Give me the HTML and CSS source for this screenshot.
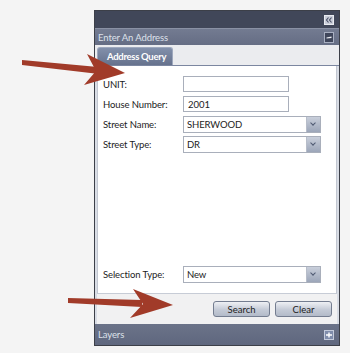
FILE: index.html
```html
<!DOCTYPE html>
<html lang="en">
<head>
    <meta charset="UTF-8">
    <meta name="viewport" content="width=device-width, initial-scale=1.0">
    <title>Enter An Address</title>
    <link rel="stylesheet" href="styles.css">
</head>
<body>

    <div class="page">
        <div class="panel">
            <div class="titlebar">
                <svg class="icon" viewBox="0 0 10 10">
                    <rect x="0.5" y="0.5" width="9" height="9" fill="#c9cdd8" stroke="#e8eaf0"/>
                    <path d="M4.5 2.5 L2.5 5 L4.5 7.5 M7.5 2.5 L5.5 5 L7.5 7.5" fill="none" stroke="#4a5168" stroke-width="1.2"/>
                </svg>
            </div>

            <div class="section-head">
                <span>Enter An Address</span>
                <svg class="icon" viewBox="0 0 10 11">
                    <rect x="0.5" y="0.5" width="9" height="10" fill="#3f465b" stroke="#a9b0c2"/>
                    <path d="M2.5 5.5 L7.5 4.5 L7.5 6 L2.5 6.5 Z" fill="#eef0f4"/>
                </svg>
            </div>

            <div class="tabs">
                <div class="tab">Address Query</div>
            </div>

            <div class="form">
                <div class="row">
                    <label>UNIT:</label>
                    <input type="text" class="field" value="">
                </div>
                <div class="row">
                    <label>House Number:</label>
                    <input type="text" class="field" value="2001">
                </div>
                <div class="row">
                    <label>Street Name:</label>
                    <div class="select"><span>SHERWOOD</span><span class="drop"></span></div>
                </div>
                <div class="row">
                    <label>Street Type:</label>
                    <div class="select"><span>DR</span><span class="drop"></span></div>
                </div>

                <div class="row last">
                    <label>Selection Type:</label>
                    <div class="select"><span>New</span><span class="drop"></span></div>
                </div>
            </div>

            <div class="actions">
                <button>Search</button>
                <button>Clear</button>
            </div>

            <div class="section-head layers">
                <span>Layers</span>
                <svg class="icon" viewBox="0 0 10 10">
                    <rect x="0.5" y="0.5" width="9" height="9" fill="#7f8cab" stroke="#c3cadb"/>
                    <path d="M2 5 H8 M5 2.5 V7.5" stroke="#ffffff" stroke-width="1.4"/>
                </svg>
            </div>
        </div>

        <!-- callout arrows drawn over the panel -->
        <svg class="arrows" viewBox="0 0 350 353">
            <polygon points="22,60 98,67 99,74 22,65" fill="#a13b29"/>
            <polygon points="87,54 125,73 84,85 96,71" fill="#a13b29"/>
            <polygon points="68,298 142,300 142,307 68,303" fill="#a13b29"/>
            <polygon points="133,289 173,305 130,318 143,304" fill="#a13b29"/>
        </svg>
    </div>

</body>
</html>
```

FILE: styles.css
```css
body {
    margin: 0;
    background-color: #f4f4f4;
    font-family: Lato, "Liberation Sans", sans-serif;
    font-size: 9.5px;
    letter-spacing: -0.1px;
    color: #1c1c1c;
}
.page {
    position: relative;
    padding: 10px 0 0 94px;
    height: 343px;
}
.panel {
    width: 244px;
    border: 1px solid #3c3f48;
    background: #d9dde5;
    display: flex;
    flex-direction: column;
}
.titlebar {
    height: 17px;
    background: #414759;
    display: flex;
    align-items: center;
    justify-content: flex-end;
    padding-right: 5px;
    border-bottom: 1px solid #8a91a4;
}
.icon {
    width: 10px;
    height: 10px;
    display: block;
}
.section-head {
    height: 16px;
    background: linear-gradient(#737b91, #656d84);
    color: #dde1ea;
    display: flex;
    align-items: center;
    justify-content: space-between;
    padding: 0 5px 0 3px;
}
.section-head .icon {
    height: 11px;
}
.section-head.layers {
    height: 21px;
    background: linear-gradient(#6b7389, #5f677e);
}
.section-head.layers .icon {
    height: 10px;
}
.tabs {
    height: 21px;
    background: #ebecef;
    border-bottom: 1px solid #7b86a0;
    display: flex;
    align-items: flex-end;
    padding-left: 2px;
    box-sizing: border-box;
}
.tab {
    height: 17px;
    padding: 0 6px 0 9px;
    background: linear-gradient(#8290ab, #66728d);
    color: #ffffff;
    font-weight: bold;
    letter-spacing: -0.3px;
    border: 1px solid #9ea8bd;
    border-bottom: none;
    border-radius: 3px 3px 0 0;
    display: flex;
    align-items: center;
}
.form {
    height: 228px;
    box-sizing: border-box;
    margin: 0 2px;
    background: #ffffff;
    border-left: 1px solid #c2c7d1;
    border-right: 1px solid #c2c7d1;
    border-bottom: 1px solid #c7ccd6;
    padding: 10px 0 11px 5px;
    display: flex;
    flex-direction: column;
    gap: 4px;
}
.row {
    height: 16px;
    display: flex;
    align-items: center;
}
.row label {
    width: 80px;
}
.row.last {
    margin-top: auto;
}
.field {
    width: 106px;
    height: 16px;
    box-sizing: border-box;
    border: 1px solid #a9afbb;
    padding: 0 4px;
    font: inherit;
    color: #1c1c1c;
    outline: none;
}
.select {
    width: 138px;
    height: 17px;
    box-sizing: border-box;
    border: 1px solid #a9afbb;
    display: flex;
    align-items: center;
    justify-content: space-between;
    padding-left: 3px;
}
.drop {
    width: 13px;
    height: 15px;
    background: linear-gradient(#c9cfdb, #9ca6b9);
    border-left: 1px solid #b7bdc9;
    position: relative;
}
.drop::after {
    content: "";
    position: absolute;
    left: 4px;
    top: 4px;
    width: 3px;
    height: 3px;
    border-right: 1px solid #4f5a72;
    border-bottom: 1px solid #4f5a72;
    transform: rotate(45deg);
}
.actions {
    height: 30px;
    margin: 0 2px;
    background: #f1f1f2;
    display: flex;
    align-items: center;
    justify-content: flex-end;
    gap: 5px;
    padding-right: 5px;
}
button {
    width: 57px;
    height: 16px;
    padding: 0;
    font: inherit;
    color: #1c1c1c;
    border: 1px solid #747d90;
    border-radius: 3px;
    background: linear-gradient(#eef0f4, #c4cad6 55%, #b3bbc9);
}
.arrows {
    position: absolute;
    left: 0;
    top: 0;
    width: 350px;
    height: 353px;
    pointer-events: none;
}
```
